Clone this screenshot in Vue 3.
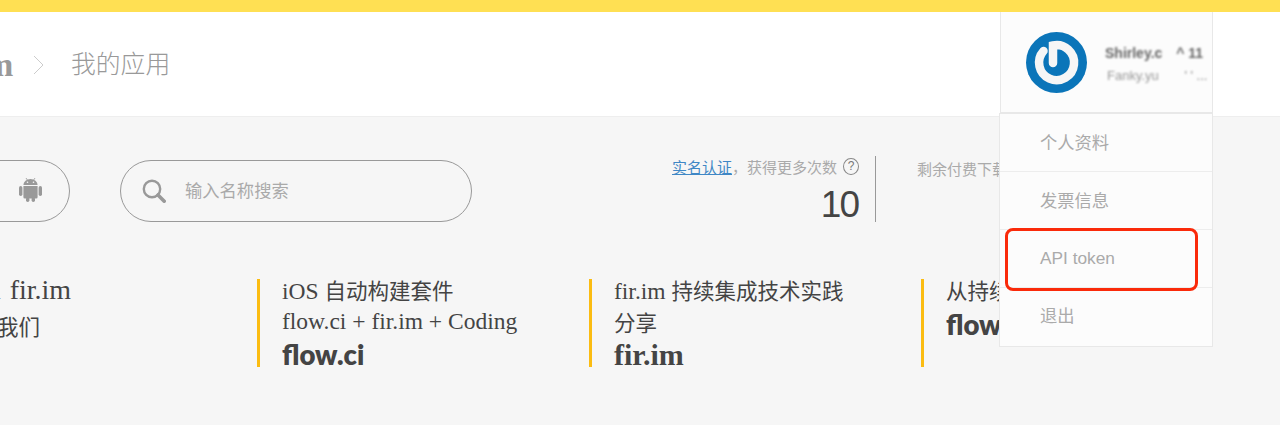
<script setup>
const menu = ['个人资料', '发票信息', 'API token', '退出']
const split = (l) => l.split(/([\u4e00-\u9fff]+)/).filter(Boolean).map((t) => ({ t, cjk: /[\u4e00-\u9fff]/.test(t) }))
const cards = [
  { lines: ['Join fir.im', '告诉我们'], logo: '', cls: 'first' },
  { lines: ['iOS 自动构建套件', 'flow.ci + fir.im + Coding'], logo: 'flow.ci', cls: 'flow' },
  { lines: ['fir.im 持续集成技术实践', '分享'], logo: 'fir.im', cls: 'fir' },
  { lines: ['从持续集成到持续交付'], logo: 'flow.ci', cls: 'flow fourth' }
].map((c) => ({ ...c, lines: c.lines.map(split) }))
</script>

<template>
  <div class="page">
    <div class="topbar"></div>
    <header class="header">
      <span class="brand">m</span>
      <svg class="chevron" width="11" height="20" viewBox="0 0 11 20"><path d="M1 1l9 9-9 9" fill="none" stroke="#ccc" stroke-width="1" /></svg>
      <span class="crumb">我的应用</span>
      <div class="user">
        <svg class="avatar" width="61" height="61" viewBox="0 0 61 61">
          <circle cx="30.5" cy="30.5" r="30.5" fill="#0b75b9" />
          <path d="M27 31V13.5A17.5 17.5 0 1 1 17.5 19" fill="none" stroke="#f6f6f6" stroke-width="8.5" stroke-linecap="round" />
        </svg>
        <div class="user-text">
          <div class="user-name">Shirley.c <span class="gap">^ 11</span></div>
          <div class="user-mail">Fanky.yu <span class="dots">' ' ...</span></div>
        </div>
      </div>
    </header>

    <main class="main">
      <section class="toolbar">
        <div class="pill platform">
          <svg class="android" width="23" height="24" viewBox="0 0 23 24" fill="#999">
            <rect x="0" y="8" width="3.4" height="10" rx="1.7" />
            <rect x="19.6" y="8" width="3.4" height="10" rx="1.7" />
            <path d="M4.4 8h14.2v11a1.5 1.5 0 0 1-1.5 1.5H5.9A1.5 1.5 0 0 1 4.4 19z" />
            <rect x="7" y="19" width="3.4" height="5" rx="1.7" />
            <rect x="12.6" y="19" width="3.4" height="5" rx="1.7" />
            <path d="M4.4 7a7.1 6 0 0 1 14.2 0z" />
            <path d="M7 0l2 3M16 0l-2 3" stroke="#999" stroke-width=".8" />
            <circle cx="8.5" cy="4.2" r=".8" fill="#f6f6f6" />
            <circle cx="14.5" cy="4.2" r=".8" fill="#f6f6f6" />
          </svg>
        </div>
        <div class="pill search">
          <svg width="24" height="24" viewBox="0 0 24 24" fill="none" stroke="#999">
            <circle cx="10" cy="10" r="8.2" stroke-width="2.4" />
            <path d="M16 16l6.2 6.2" stroke-width="3.6" stroke-linecap="round" />
          </svg>
          <span class="placeholder">输入名称搜索</span>
        </div>
        <div class="stat">
          <div class="stat-label">
            <a class="link">实名认证</a><span>，获得更多次数</span>
            <span class="help">?</span>
          </div>
          <div class="stat-num">10</div>
        </div>
        <div class="stat-paid">剩余付费下载次数</div>
      </section>

      <section class="cards">
        <article v-for="(c, i) in cards" :key="i" class="card" :class="c.cls">
          <p v-for="(l, j) in c.lines" :key="j" class="line"><span v-for="(s, k) in l" :key="k" :class="s.cjk ? 'cjk' : 'latin'">{{ s.t }}</span></p>
          <p v-if="c.logo" class="logo">{{ c.logo }}</p>
        </article>
      </section>
    </main>

    <ul class="dropdown">
      <li v-for="m in menu" :key="m" class="item">{{ m }}</li>
      <li class="mark"></li>
    </ul>
  </div>
</template>

<style scoped>
.page {
  position: relative;
  width: 1280px;
  height: 425px;
  overflow: hidden;
  background: #f6f6f6;
  font-family: "Liberation Sans", "Noto Sans CJK SC", sans-serif;
}
.topbar { height: 12px; background: #ffe053; }
.header {
  height: 104px;
  background: #fff;
  border-bottom: 1px solid #eee;
  display: flex;
  align-items: center;
  position: relative;
}
.brand {
  margin-left: -15px;
  width: 29px;
  font: bold 34px "Liberation Serif", serif;
  color: #999;
  position: relative;
  top: 1px;
}
.chevron { margin-left: 19px; margin-top: 2px; }
.crumb { margin-left: 27px; margin-bottom: 4px; font-size: 24.8px; color: #999; font-weight: 300; }
.user {
  position: absolute;
  left: 1000px;
  top: 0;
  width: 213px;
  height: 101px;
  box-sizing: border-box;
  background: #fcfcfc;
  border: 1px solid #e8e8e8;
  border-top: 0;
  display: flex;
  align-items: center;
  padding-left: 25px;
}
.avatar { flex: none; margin-top: 1px; }
.user-text { margin-left: 18px; margin-top: 4px; white-space: nowrap; }
.user-name { font-size: 14px; font-weight: bold; color: #666; filter: blur(1.2px); line-height: 20px; }
.user-mail { font-size: 13px; color: #999; filter: blur(1.2px); line-height: 20px; margin-top: 3px; padding-left: 2px; }
.gap { margin-left: 10px; }
.dots { margin-left: 22px; color: #888; }
.toolbar {
  display: flex;
  padding-top: 43px;
  height: 66px;
  align-items: flex-start;
}
.pill {
  box-sizing: border-box;
  height: 62px;
  border: 1px solid #999;
  border-radius: 31px;
  display: flex;
  align-items: center;
}
.platform {
  width: 130px;
  margin-left: -60px;
  justify-content: flex-end;
  padding-right: 27px;
}
.android { margin-bottom: 2px; }
.search { width: 352px; margin-left: 50px; padding-left: 21px; }
.placeholder { margin-left: 19px; margin-bottom: 3px; font-size: 17.3px; color: #aaa; }
.stat {
  box-sizing: border-box;
  width: 204px;
  height: 66px;
  margin-left: 200px;
  margin-top: -4px;
  border-right: 1px solid #999;
  padding-right: 16px;
  text-align: right;
}
.stat-label {
  display: flex;
  justify-content: flex-end;
  align-items: center;
  height: 24px;
  margin-top: -2px;
  font-size: 15px;
  color: #aaa;
  white-space: nowrap;
}
.link { color: #3f87c5; text-decoration: underline; }
.help {
  box-sizing: border-box;
  width: 17px;
  height: 17px;
  margin-left: 6px;
  border: 1.5px solid #888;
  border-radius: 50%;
  font-size: 12px;
  line-height: 14px;
  text-align: center;
  color: #777;
}
.stat-num { font-size: 37px; line-height: 48px; margin-top: 3px; padding-right: 1px; letter-spacing: -2px; color: #444; }
.stat-paid { margin-left: 41px; margin-top: -2px; font-size: 15px; line-height: 24px; color: #aaa; white-space: nowrap; }
.cards {
  display: grid;
  grid-template-columns: repeat(4, 332px);
  margin-left: -75px;
  margin-top: 53px;
}
.card {
  box-sizing: border-box;
  height: 88px;
  border-left: 3px solid #fbbc12;
  padding-left: 22px;
  color: #444;
  white-space: nowrap;
}
.first { border-left-color: transparent; }
.line {
  margin: 0;
  height: 30.5px;
  line-height: 23px;
}
.line:first-child { margin-top: -1px; height: 31.5px; }
.first .line:first-child { padding-left: 4px; height: 36px; word-spacing: 2px; }
.first .line:first-child .latin { font-size: 28px; }
.first .line + .line { padding-left: 4px; }
.latin { font-family: "Liberation Serif", serif; font-size: 23.5px; }
.cjk { font-family: "Noto Sans CJK SC", sans-serif; font-size: 21.5px; }
.logo { margin: 1px 0 0; height: 27px; font-weight: bold; color: #444; }
.flow .logo { font: 800 27.5px/28px Lato, sans-serif; }
.fir .logo { font: bold 30px/28px "Liberation Serif", serif; }
.dropdown {
  position: absolute;
  left: 999px;
  top: 113px;
  width: 214px;
  box-sizing: border-box;
  margin: 0;
  padding: 0;
  list-style: none;
  background: #fcfcfc;
  border: 1px solid #e8e8e8;
}
.item {
  height: 58px;
  box-sizing: border-box;
  padding-left: 40px;
  line-height: 58px;
  font-size: 17.3px;
  color: #aaa;
  border-bottom: 1px solid #ededed;
}
.item:nth-child(n+3) { line-height: 56px; }
.item:nth-child(4) { border-bottom: 0; }
.mark {
  position: absolute;
  left: 5px;
  top: 114px;
  width: 193px;
  height: 63px;
  box-sizing: border-box;
  border: 3px solid #fa2a0a;
  border-radius: 8px;
}
</style>

<style>
html, body { overflow: hidden; }
</style>
